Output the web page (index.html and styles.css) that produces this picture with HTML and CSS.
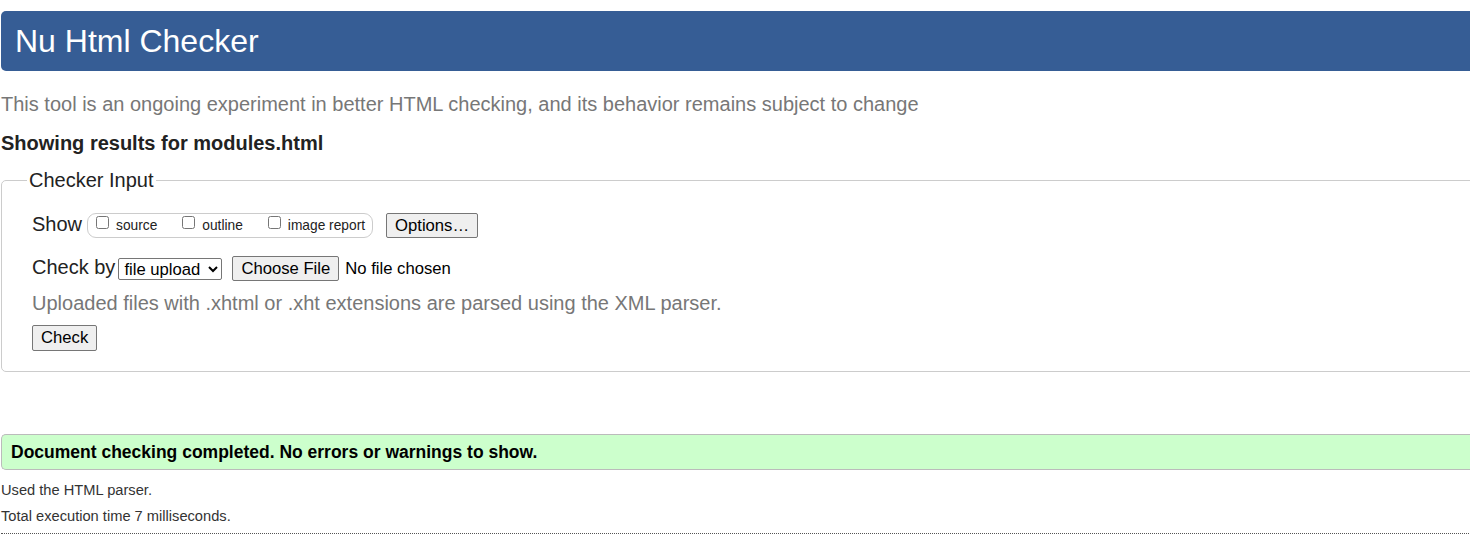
FILE: index.html
```html
<!DOCTYPE html>
<html lang="en">
<head>
<meta charset="utf-8">
<title>Nu Html Checker</title>
<link rel="stylesheet" href="styles.css">
</head>
<body>
<div class="page">
  <h1 class="title">Nu Html Checker</h1>
  <p class="intro">This tool is an ongoing experiment in better HTML checking, and its behavior remains subject to change</p>
  <p class="showing">Showing results for modules.html</p>
  <fieldset class="input">
    <legend class="legend">Checker Input</legend>
    <div class="row">
      <span class="label">Show</span>
      <span class="pill">
        <label class="opt"><input type="checkbox"> source</label>
        <label class="opt"><input type="checkbox"> outline</label>
        <label class="opt"><input type="checkbox"> image report</label>
      </span>
      <button class="btn" type="button">Options…</button>
    </div>
    <div class="row row-check">
      <span class="label">Check by</span>
      <select class="sel"><option>file upload</option></select>
      <input class="file" type="file">
    </div>
    <p class="hint">Uploaded files with .xhtml or .xht extensions are parsed using the XML parser.</p>
    <button class="btn btn-check" type="button">Check</button>
  </fieldset>
  <p class="success">Document checking completed. No errors or warnings to show.</p>
  <p class="meta meta-first">Used the HTML parser.</p>
  <p class="meta">Total execution time 7 milliseconds.</p>
  <div class="rule"></div>
</div>
</body>
</html>
```
FILE: styles.css
```css
html, body {
  margin: 0;
  padding: 0;
  overflow: hidden;
  background: #fff;
}
body {
  font-family: "Liberation Sans", Arial, sans-serif;
  color: #222;
}
.page {
  padding: 11px 0 0 1px;
  width: 1500px;
}
.title {
  margin: 0;
  padding: 12px 14px;
  font-size: 32px;
  font-weight: normal;
  line-height: 36px;
  color: #fff;
  background: #365d95;
  border-radius: 5px 0 0 5px;
}
.intro {
  margin: 22px 0 0;
  font-size: 20px;
  line-height: 23px;
  color: #777;
}
.showing {
  margin: 16px 0 0;
  font-size: 20px;
  line-height: 23px;
  font-weight: bold;
  color: #222;
}
.input {
  margin: 14px 0 0;
  padding: 21px 0 20px 25px;
  border: 1px solid #ccc;
  border-radius: 5px 0 0 5px;
  min-width: 0;
}
.legend {
  padding: 0 2px;
  font-size: 20px;
  line-height: 23px;
  color: #222;
}
.row {
  display: flex;
  align-items: center;
  height: 25px;
  padding-left: 5px;
}
.row-check {
  margin-top: 18px;
}
.label {
  font-size: 20px;
  line-height: 23px;
  margin-top: -2px;
}
.pill {
  display: flex;
  align-items: center;
  gap: 21px;
  height: 23px;
  margin-left: 5px;
  padding: 0 7px 0 4px;
  border: 1px solid #ccc;
  border-radius: 9px;
  font-size: 13.75px;
}
.opt {
  display: flex;
  align-items: center;
  white-space: nowrap;
}
.opt input {
  margin: -3px 7px 3px 4px;
  width: 13px;
  height: 13px;
}
.btn {
  font-family: "Liberation Sans", Arial, sans-serif;
  font-size: 16.67px;
  color: #000;
  background: #efefef;
  border: 1px solid #767676;
  border-radius: 2px;
  height: 25px;
  padding: 0 8px;
  margin: 0 0 0 13px;
}
.sel {
  font-family: "Liberation Sans", Arial, sans-serif;
  font-size: 16.67px;
  color: #000;
  height: 22px;
  width: 104px;
  margin-left: 3px;
  padding: 0 0 0 1px;
  border: 1px solid #767676;
  border-radius: 2px;
  background: #fff;
}
.file {
  font-family: "Liberation Sans", Arial, sans-serif;
  font-size: 16.67px;
  color: #000;
  margin-left: 10px;
}
.file::file-selector-button {
  font-family: "Liberation Sans", Arial, sans-serif;
  font-size: 16.67px;
  height: 25px;
  padding: 0 8px;
  margin-right: 6px;
  background: #efefef;
  border: 1px solid #767676;
  border-radius: 2px;
  color: #000;
}
.hint {
  margin: 11px 0 0 5px;
  font-size: 20px;
  line-height: 23px;
  color: #777;
}
.btn-check {
  display: block;
  margin: 10px 0 0 5px;
  height: 26px;
  padding: 0 8px;
}
.success {
  margin: 62px 0 0;
  padding: 7px 9px;
  font-size: 17.5px;
  line-height: 20px;
  font-weight: bold;
  color: #000;
  background: #ccffcc;
  border: 1px solid #bbb;
  border-right: 0;
  border-radius: 5px 0 0 5px;
}
.meta {
  margin: 9px 0 0;
  font-size: 14.67px;
  line-height: 17px;
  color: #333;
}
.meta-first {
  margin-top: 12px;
}
.rule {
  margin-top: 8px;
  border-top: 1px dotted #555;
}
```
